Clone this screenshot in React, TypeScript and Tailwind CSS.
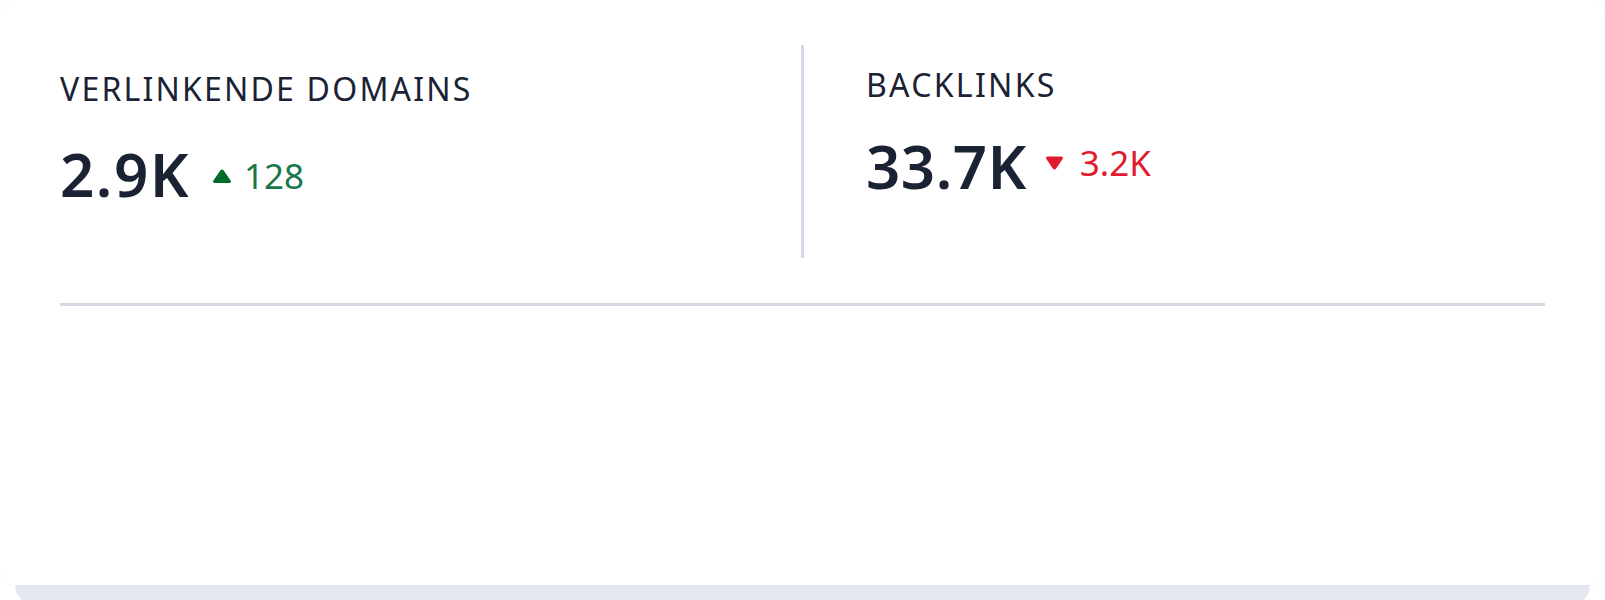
import React from "react";

const font = { fontFamily: '"Noto Sans", "Open Sans", sans-serif' };

function Up() {
  return (
    <svg width="20" height="15" viewBox="0 0 20 15" className="shrink-0">
      <path d="M8.3 1.6 Q10 -0.6 11.7 1.6 L18.6 11.4 Q19.9 13.6 17.4 13.9 L2.6 13.9 Q0.1 13.6 1.4 11.4 Z" fill="#006b2a" />
    </svg>
  );
}

function Down() {
  return (
    <svg width="19" height="14" viewBox="0 0 19 14" className="shrink-0">
      <path d="M7.8 12.4 Q9.5 14.6 11.2 12.4 L17.6 3 Q18.8 0.6 16.4 0.4 L2.6 0.4 Q0.2 0.6 1.4 3 Z" fill="#e01b2d" />
    </svg>
  );
}

export default function App() {
  return (
    <div className="w-[1605px] h-[600px] bg-white overflow-hidden" style={font}>
      <div className="relative z-10 h-[585px] rounded-[16px] bg-white px-[60px] pt-[45px] shadow-[0_0_2px_rgba(0,0,0,0.06)]">
        <div className="grid grid-cols-[741px_3px_741px] h-[213px]">
          <div className="pt-[24px]">
            <div className="text-[32px] leading-[40px] tracking-[2.2px] text-[#1a2233]">VERLINKENDE DOMAINS</div>
            <div className="mt-[32px] flex items-center">
              <span className="text-[60px] leading-[66px] font-semibold text-[#1a2233] tracking-[1.5px]">2.9K</span>
              <span className="ml-[22px] mt-[4px]"><Up /></span>
              <span className="ml-[12px] mt-[4px] text-[35px] leading-[40px] text-[#19774a]">128</span>
            </div>
          </div>
          <div className="bg-[#d6d9e5]" />
          <div className="pl-[62px] pt-[20px]">
            <div className="text-[32px] leading-[40px] tracking-[2.3px] text-[#1a2233]">BACKLINKS</div>
            <div className="mt-[28px] flex items-center">
              <span className="text-[60px] leading-[66px] font-semibold text-[#1a2233] tracking-[0.5px]">33.7K</span>
              <span className="ml-[18px] -mt-[6px]"><Down /></span>
              <span className="ml-[16px] -mt-[6px] text-[35px] leading-[40px] text-[#e01b2d]">3.2K</span>
            </div>
          </div>
        </div>
        <div className="mt-[45px] h-[3px] bg-[#d6d9e5]" />
      </div>
      <div className="relative -mt-[20px] mx-[15px] h-[40px] rounded-b-[20px] bg-[#e5e8f0]" />
    </div>
  );
}
